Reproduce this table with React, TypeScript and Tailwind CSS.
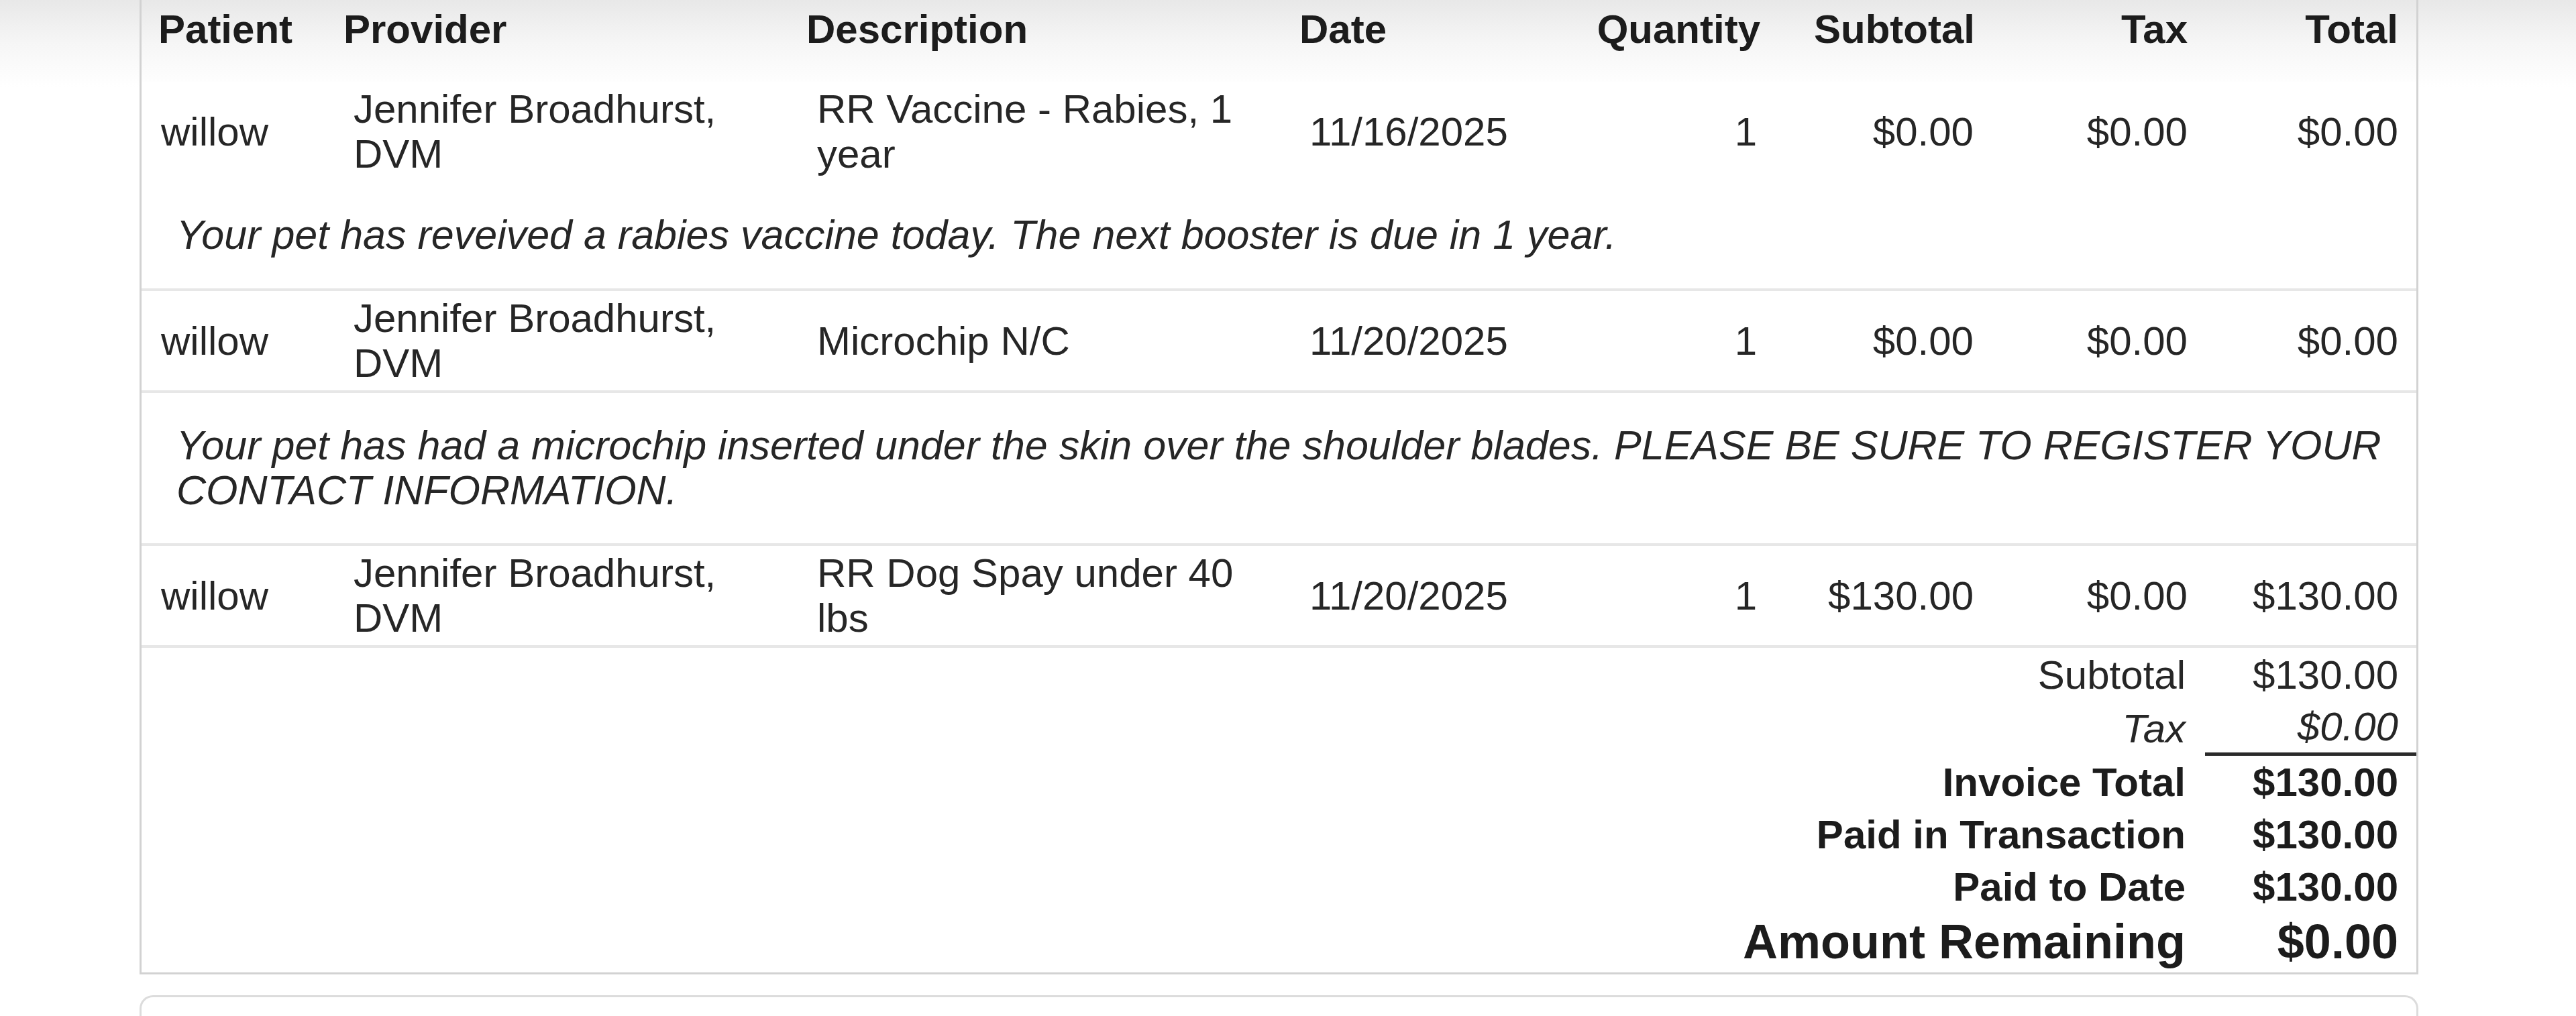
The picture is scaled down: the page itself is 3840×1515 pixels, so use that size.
import React from 'react';

type LineItem = {
  patient: string;
  provider: string;
  description: string;
  date: string;
  quantity: number;
  subtotal: string;
  tax: string;
  total: string;
  note: string;
  noteHeight: string;
  sepAfterRow: boolean;
};

const items: LineItem[] = [
  {
    patient: 'willow',
    provider: 'Jennifer Broadhurst, DVM',
    description: 'RR Vaccine - Rabies, 1 year',
    date: '11/16/2025',
    quantity: 1,
    subtotal: '$0.00',
    tax: '$0.00',
    total: '$0.00',
    note: 'Your pet has reveived a rabies vaccine today. The next booster is due in 1 year.',
    noteHeight: 'h-[160px]',
    sepAfterRow: false,
  },
  {
    patient: 'willow',
    provider: 'Jennifer Broadhurst, DVM',
    description: 'Microchip N/C',
    date: '11/20/2025',
    quantity: 1,
    subtotal: '$0.00',
    tax: '$0.00',
    total: '$0.00',
    note: 'Your pet has had a microchip inserted under the skin over the shoulder blades. PLEASE BE SURE TO REGISTER YOUR CONTACT INFORMATION.',
    noteHeight: 'h-[224px]',
    sepAfterRow: true,
  },
  {
    patient: 'willow',
    provider: 'Jennifer Broadhurst, DVM',
    description: 'RR Dog Spay under 40 lbs',
    date: '11/20/2025',
    quantity: 1,
    subtotal: '$130.00',
    tax: '$0.00',
    total: '$130.00',
    note: '',
    noteHeight: '',
    sepAfterRow: true,
  },
];

const cols = 'grid grid-cols-[289px_690px_735px_345px_370px_320px_320px_322px]';

const Separator = () => <div className="h-[4px] bg-[#e7e7e7]" />;

const DataRow = ({ item }: { item: LineItem }) => (
  <div className={`${cols} h-[148px] items-center`}>
    <div className="pl-[29px]">{item.patient}</div>
    <div className="pl-[27px]">{item.provider}</div>
    <div className="pl-[28px] pr-[27px]">{item.description}</div>
    <div className="pl-[27px]">{item.date}</div>
    <div className="pr-[21px] text-right">{item.quantity}</div>
    <div className="pr-[18px] text-right">{item.subtotal}</div>
    <div className="pr-[19px] text-right">{item.tax}</div>
    <div className="pr-[27px] text-right">{item.total}</div>
  </div>
);

const TotalRow = ({
  label,
  value,
  className = '',
  valueClass = '',
}: {
  label: string;
  value: string;
  className?: string;
  valueClass?: string;
}) => (
  <div className={`grid grid-cols-[1fr_315px] ${className}`}>
    <div className="flex items-center justify-end pr-[29px]">{label}</div>
    <div className={`flex items-center justify-end pr-[27px] ${valueClass}`}>{value}</div>
  </div>
);

export default function App() {
  return (
    <div className="relative min-h-screen bg-white font-['Liberation_Sans',Arial,sans-serif] text-[60px] leading-[67px] text-[#262626]">
      {/* shadow from the bar above */}
      <div className="pointer-events-none absolute inset-x-0 top-0 h-[130px] bg-gradient-to-b from-[#e8e8e8] via-[#f6f6f6] to-white/0" />

      <div className="relative ml-[208px] w-[3397px]">
        <div className="border-x-[3px] border-b-[3px] border-[#d2d2d2]">
          {/* header */}
          <div className={`${cols} h-[122px] items-start pt-[10px] font-bold text-[#1c1c1c]`}>
            <div className="pl-[25px]">Patient</div>
            <div className="pl-[12px]">Provider</div>
            <div className="pl-[12px]">Description</div>
            <div className="pl-[12px]">Date</div>
            <div className="pr-[16px] text-right">Quantity</div>
            <div className="pr-[16px] text-right">Subtotal</div>
            <div className="pr-[19px] text-right">Tax</div>
            <div className="pr-[27px] text-right">Total</div>
          </div>

          <div className="bg-white">
            {items.map((item, i) => (
              <React.Fragment key={i}>
                <DataRow item={item} />
                {item.sepAfterRow && <Separator />}
                {item.note && (
                  <>
                    <div className={`flex items-center ${item.noteHeight} pl-[52px] pr-[30px] text-[61px] italic`}>
                      {item.note}
                    </div>
                    <Separator />
                  </>
                )}
              </React.Fragment>
            ))}

            {/* totals */}
            <div className="pt-[1px] pb-[3px]">
              <TotalRow label="Subtotal" value="$130.00" className="h-[78px]" />
              <TotalRow
                label="Tax"
                value="$0.00"
                className="h-[82px] italic"
                valueClass="border-b-[5px] border-[#2a2a2a]"
              />
              <TotalRow label="Invoice Total" value="$130.00" className="h-[78px] font-bold text-[#1c1c1c]" />
              <TotalRow label="Paid in Transaction" value="$130.00" className="h-[78px] font-bold text-[#1c1c1c]" />
              <TotalRow label="Paid to Date" value="$130.00" className="h-[78px] font-bold text-[#1c1c1c]" />
              <TotalRow
                label="Amount Remaining"
                value="$0.00"
                className="h-[86px] text-[72px] leading-[80px] font-bold text-[#1c1c1c]"
              />
            </div>
          </div>
        </div>

        {/* next card */}
        <div className="mt-[31px] h-[80px] rounded-t-[20px] border-x-[3px] border-t-[3px] border-[#dcdcdc]" />
      </div>
    </div>
  );
}
